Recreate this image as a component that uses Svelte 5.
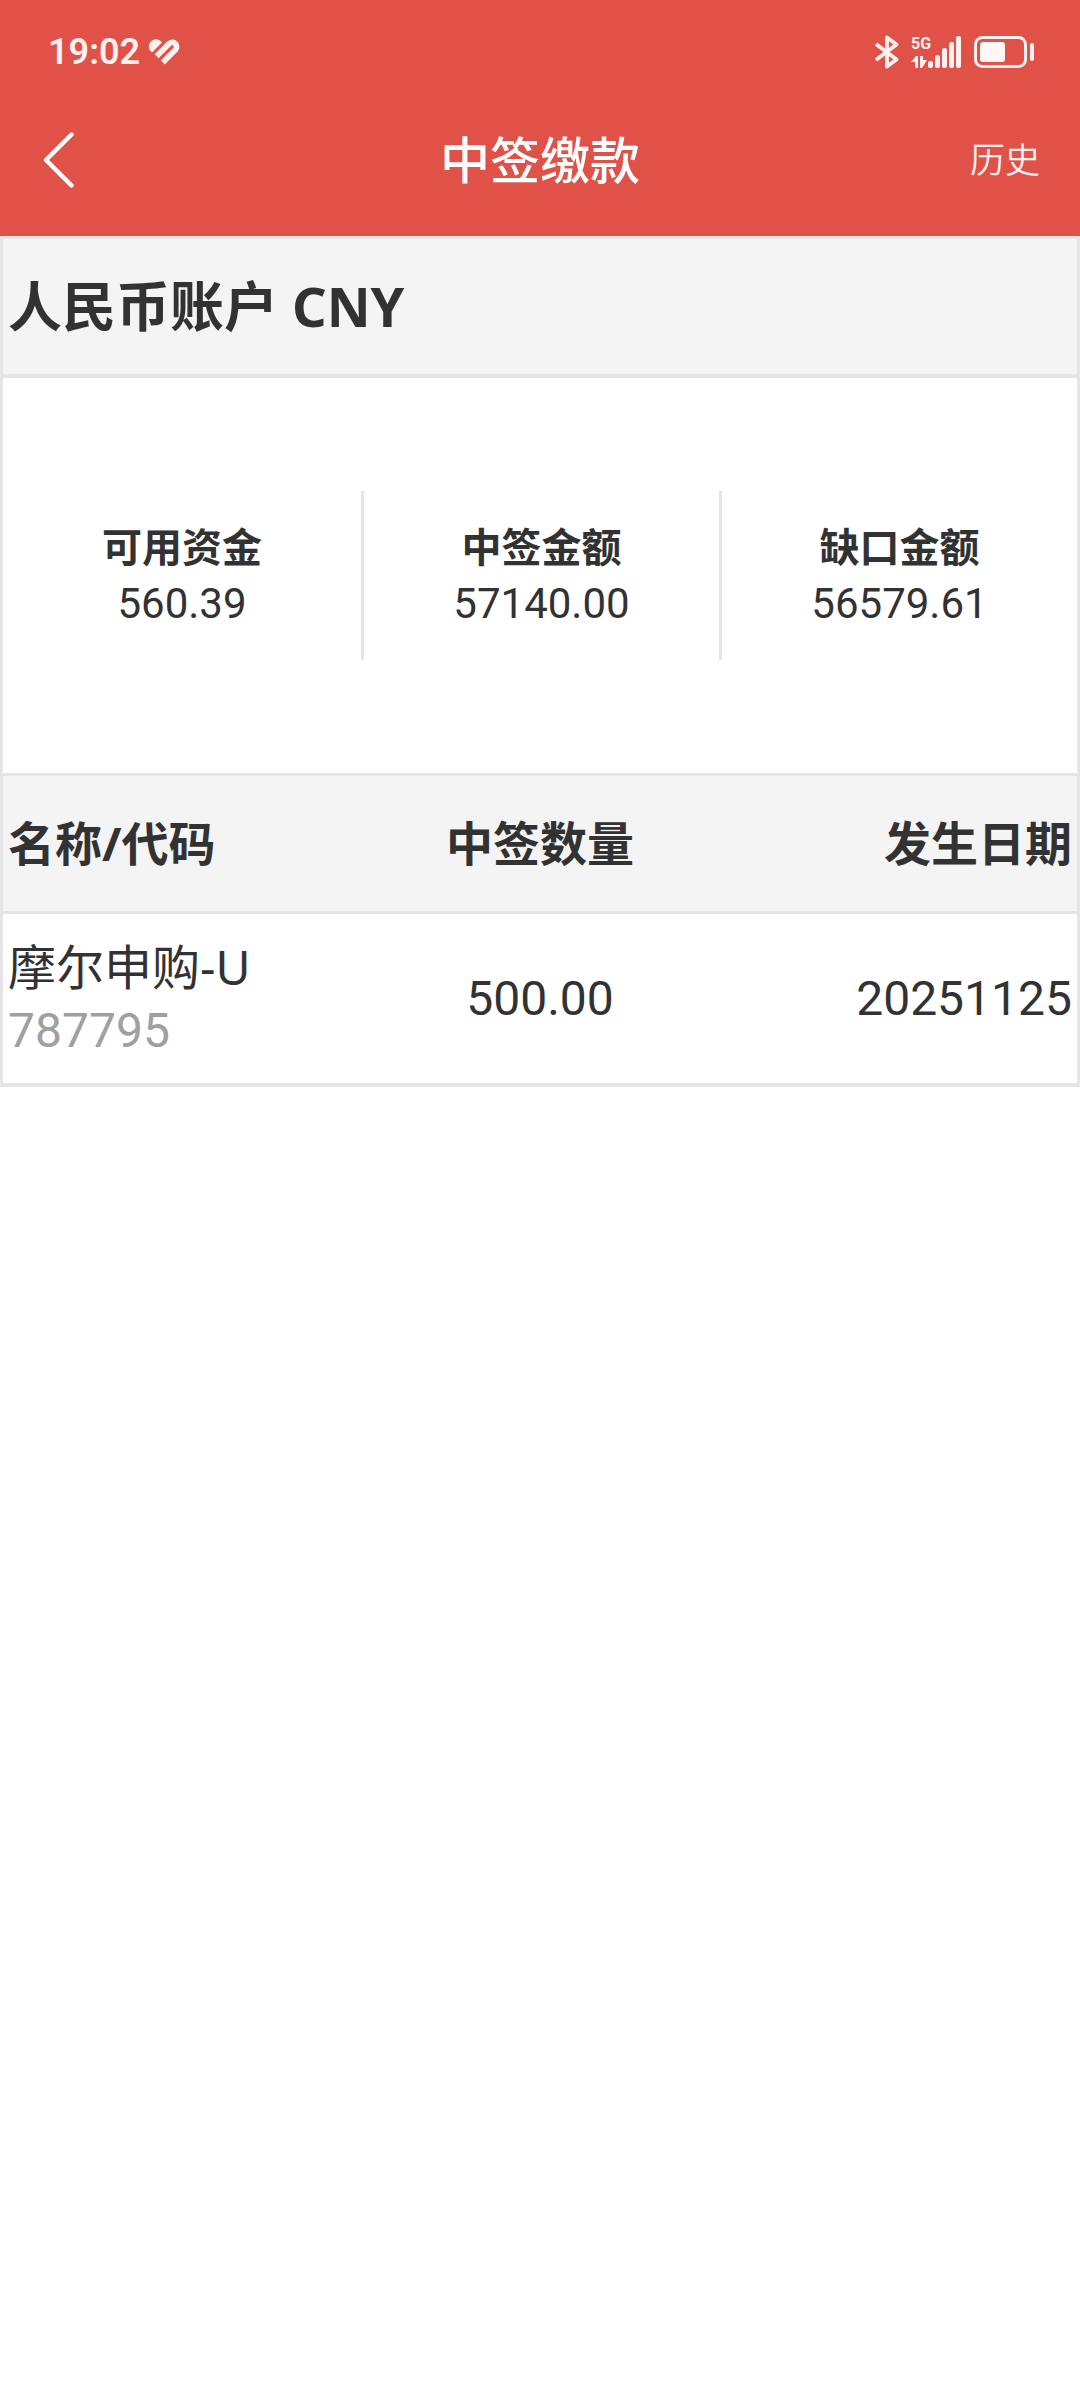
<script>
  const title = "中签缴款";
  const account = "人民币账户 CNY";

  const summary = [
    { label: "可用资金", value: "560.39" },
    { label: "中签金额", value: "57140.00" },
    { label: "缺口金额", value: "56579.61" },
  ];

  const rows = [
    { name: "摩尔申购-U", code: "787795", amount: "500.00", date: "20251125" },
  ];
</script>

<div class="page" lang="zh-CN">
  <header>
    <div class="status">
      <div class="status-left">
        <span class="time">19:02</span>
        <svg width="32" height="30" viewBox="0 0 32 30" aria-hidden="true">
          <path d="M4 15.5A7.2 7.2 0 1 1 14 5.5Z" fill="#fff1f0" />
          <path d="M8.6 19.2 21.4 6.4A4.4 4.4 0 0 1 27.6 12.6L14.8 25.4" fill="none" stroke="#fff1f0" stroke-width="5.6" />
        </svg>
      </div>
      <div class="status-right">
        <svg width="24" height="36" viewBox="0 0 24 36" fill="none" stroke="#fff1f0" stroke-width="3.8" stroke-linejoin="round" aria-hidden="true">
          <path d="M1 10 21.5 25.5 12 32.5V3.5L21.5 10.5 1 26" />
        </svg>
        <div class="signal">
          <div class="net">
            <span>5G</span>
            <svg width="16" height="12" viewBox="0 0 16 12" fill="#fff1f0" aria-hidden="true">
              <path d="M0 6 5 0H7V12H4V6ZM9 0H12V4H16L11 12H9Z" />
            </svg>
          </div>
          <svg class="bars" width="34" height="32" viewBox="0 0 34 32" fill="#fff1f0" aria-hidden="true">
            <rect x="0" y="25" width="5" height="7" rx="2" />
            <rect x="7" y="19" width="5" height="13" rx="2" />
            <rect x="14" y="12" width="5" height="20" rx="2" />
            <rect x="21" y="6" width="5" height="26" rx="2" />
            <rect x="28" y="0" width="5" height="32" rx="2" />
          </svg>
        </div>
        <svg width="60" height="34" viewBox="0 0 60 34" aria-hidden="true">
          <rect x="1.5" y="2.5" width="50" height="29" rx="7" fill="none" stroke="#fff1f0" stroke-width="3" />
          <rect x="6" y="7" width="25" height="20" rx="3" fill="#fff6f5" />
          <rect x="56" y="8" width="4" height="18" rx="2" fill="#fff1f0" />
        </svg>
      </div>
    </div>
    <nav>
      <button class="back" aria-label="返回">
        <svg width="32" height="56" viewBox="0 0 32 56" fill="none" stroke="#fff" stroke-width="4.4" stroke-linecap="round" stroke-linejoin="round">
          <path d="M28.5 2.5 3 28 28.5 53.5" />
        </svg>
      </button>
      <h1>{title}</h1>
      <a href="#history">历史</a>
    </nav>
  </header>

  <main>
    <h2>{account}</h2>
    <dl>
      {#each summary as item}
        <div class="item">
          <dt>{item.label}</dt>
          <dd>{item.value}</dd>
        </div>
      {/each}
    </dl>
    <table>
      <thead>
        <tr>
          <th>名称/代码</th>
          <th>中签数量</th>
          <th>发生日期</th>
        </tr>
      </thead>
      <tbody>
        {#each rows as row}
          <tr>
            <td>
              <div class="name">{row.name}</div>
              <div class="code">{row.code}</div>
            </td>
            <td>{row.amount}</td>
            <td>{row.date}</td>
          </tr>
        {/each}
      </tbody>
    </table>
  </main>
</div>

<style>
  :global(body) {
    background: #fff;
  }

  .page {
    font-family: "Noto Sans", "Noto Sans CJK SC", sans-serif;
    color: #323232;
  }

  header {
    background: #e05247;
    color: #fff;
    padding-top: 20px;
  }

  .status {
    height: 64px;
    padding: 0 46px 0 48px;
    display: flex;
    align-items: center;
    justify-content: space-between;
  }

  .status-left,
  .status-right {
    display: flex;
    align-items: center;
    color: #fff1f0;
  }

  .status-left {
    gap: 8px;
  }

  .status-right {
    gap: 12px;
  }

  .time {
    font: 600 36px/64px Roboto, sans-serif;
  }

  .signal {
    display: flex;
    align-items: flex-end;
    gap: 1px;
  }

  .net {
    width: 16px;
    display: flex;
    flex-direction: column;
    gap: 4px;
  }

  .net span {
    font: 700 16px/16px Roboto, sans-serif;
  }

  .signal svg {
    display: block;
  }

  nav {
    height: 152px;
    padding: 0 40px;
    display: grid;
    grid-template-columns: 1fr auto 1fr;
    align-items: center;
  }

  .back {
    justify-self: start;
    padding: 0 3px;
    border: 0;
    background: none;
    cursor: pointer;
  }

  .back svg {
    display: block;
  }

  h1 {
    margin: 0;
    font-size: 50px;
    line-height: 72px;
    font-weight: 500;
  }

  nav a {
    justify-self: end;
    color: #fff1f0;
    font-size: 35px;
    line-height: 72px;
    font-weight: 350;
    text-decoration: none;
  }

  main {
    border: 3px solid #e5e5e5;
    border-bottom-width: 4px;
  }

  h2 {
    margin: 0;
    padding: 0 5px;
    background: #f4f4f4;
    border-bottom: 4px solid #e5e5e5;
    font-size: 54px;
    line-height: 135px;
    font-weight: 700;
  }

  dl {
    margin: 0;
    padding: 113px 0;
    display: grid;
    grid-template-columns: repeat(3, 1fr);
    text-align: center;
  }

  .item {
    padding: 28px 0 27px;
  }

  .item + .item {
    border-left: 3px solid #e5e5e5;
  }

  dt {
    font-size: 40px;
    line-height: 56px;
    font-weight: 700;
  }

  dd {
    margin: 0;
    font-family: Roboto, sans-serif;
    font-size: 42px;
    line-height: 58px;
  }

  table {
    width: 100%;
    border-collapse: collapse;
    table-layout: fixed;
  }

  thead tr {
    background: #f4f4f4;
    box-shadow: inset 0 3px #e5e5e5, inset 0 -3px #e5e5e5;
  }

  th,
  td {
    padding: 0 5px;
    text-align: center;
  }

  th {
    font-size: 47px;
    line-height: 141px;
    font-weight: 700;
  }

  td {
    height: 169px;
    font-family: Roboto, sans-serif;
    font-size: 48px;
    line-height: 64px;
  }

  th:first-child,
  td:first-child {
    text-align: left;
  }

  th:last-child,
  td:last-child {
    text-align: right;
  }

  .name {
    font-family: "Noto Sans", "Noto Sans CJK SC", sans-serif;
  }

  .code {
    color: #a0a0a0;
  }
</style>
